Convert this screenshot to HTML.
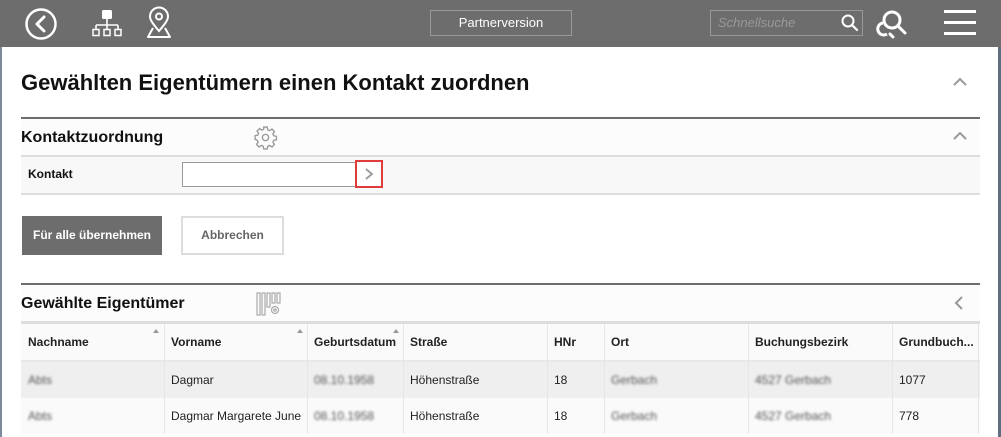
<!DOCTYPE html>
<html><head><meta charset="utf-8"><style>
*{box-sizing:border-box;margin:0;padding:0}
body{width:1001px;height:437px;overflow:hidden;background:#fff;font-family:"Liberation Sans",Arial,sans-serif;position:relative;color:#111}
.abs{position:absolute}
.hdr{left:0;top:0;width:1001px;height:47px;background:#6d6d6d}
.lb{left:0;top:47px;width:2px;height:390px;background:#7d8a99}
.rb{left:998px;top:47px;width:3px;height:390px;background:#5f6f7f}
.line{left:21px;width:959px}
.th{font-size:12px;font-weight:bold;color:#222;top:335px}
.td{font-size:12px;color:#222}
.blur{filter:blur(1.3px);color:#555;font-size:12px!important}
.sep{width:1px;background:#e6e6e6}
</style></head><body>
<div class="abs hdr"></div>
<svg class="abs" style="left:24px;top:7px" width="34" height="34" viewBox="0 0 34 34"><circle cx="17" cy="17" r="14.5" fill="none" stroke="#fff" stroke-width="2.5"/><path d="M20 10 L13 17 L20 24" fill="none" stroke="#fff" stroke-width="3" stroke-linecap="round" stroke-linejoin="round"/></svg>
<svg class="abs" style="left:91px;top:9px" width="32" height="30" viewBox="0 0 32 30"><rect x="11" y="1" width="10" height="9" rx="1.5" fill="#fff"/><path d="M16 10V16M5 16H27M5 16V20M16 16V20M27 16V20" stroke="#fff" stroke-width="1.6" fill="none"/><rect x="2" y="20.5" width="6" height="6" fill="none" stroke="#fff" stroke-width="1.5"/><rect x="13" y="20.5" width="6" height="6" fill="none" stroke="#fff" stroke-width="1.5"/><rect x="24" y="20.5" width="6" height="6" fill="none" stroke="#fff" stroke-width="1.5"/></svg>
<svg class="abs" style="left:142px;top:6px" width="34" height="34" viewBox="0 0 34 34"><path d="M17 25 C11 18 8 14 8 10.5 A9 9 0 0 1 26 10.5 C26 14 23 18 17 25Z" fill="none" stroke="#fff" stroke-width="2"/><circle cx="17" cy="10.5" r="3" fill="none" stroke="#fff" stroke-width="2"/><path d="M11 22 L6 31 H28 L23 22" fill="none" stroke="#fff" stroke-width="2" stroke-linejoin="round"/></svg>
<div class="abs" style="left:430px;top:10px;width:142px;height:26px;border:1px solid #999;color:#fff;font-size:13px;text-align:center;line-height:24px">Partnerversion</div>
<div class="abs" style="left:710px;top:10px;width:153px;height:26px;border:1px solid #999;color:#999;font-size:13px;font-style:italic;line-height:24px;padding-left:7px">Schnellsuche</div>
<svg class="abs" style="left:840px;top:13px" width="20" height="20" viewBox="0 0 20 20"><circle cx="8" cy="8" r="5.5" fill="none" stroke="#fff" stroke-width="2"/><path d="M12 12L17 17" stroke="#fff" stroke-width="2.2" stroke-linecap="round"/></svg>
<svg class="abs" style="left:875px;top:6px" width="38" height="36" viewBox="0 0 38 36"><circle cx="17" cy="14" r="8" fill="none" stroke="#fff" stroke-width="3"/><path d="M23 20L30 27" stroke="#fff" stroke-width="3" stroke-linecap="round"/><path d="M8 17 A6 6 0 1 0 12 28" fill="none" stroke="#fff" stroke-width="3"/><path d="M15 28L18 31" stroke="#fff" stroke-width="3" stroke-linecap="round"/></svg>
<div class="abs" style="left:944px;top:10px;width:32px;height:3px;background:#fff"></div>
<div class="abs" style="left:944px;top:21px;width:32px;height:3px;background:#fff"></div>
<div class="abs" style="left:944px;top:32px;width:32px;height:3px;background:#fff"></div>
<div class="abs lb"></div><div class="abs rb"></div>

<div class="abs" style="left:21px;top:70px;font-size:22px;font-weight:bold;color:#111">Gewählten Eigentümern einen Kontakt zuordnen</div>
<svg class="abs" style="left:952px;top:77px" width="16" height="10"><path d="M2 8L8 2L14 8" fill="none" stroke="#999" stroke-width="2"/></svg>
<div class="abs line" style="top:117px;height:2px;background:#6d6d6d"></div>
<div class="abs line" style="top:119px;height:37px;background:#fcfcfc"></div>
<div class="abs" style="left:21px;top:129px;font-size:16px;font-weight:bold">Kontaktzuordnung</div>
<svg class="abs" style="left:253px;top:125px" width="25" height="25" viewBox="0 0 24 24"><path fill="none" stroke="#999" stroke-width="1.3" d="M10.3 2h3.4l.5 2.6 1.8.8 2.2-1.5 2.4 2.4-1.5 2.2.8 1.8 2.6.5v3.4l-2.6.5-.8 1.8 1.5 2.2-2.4 2.4-2.2-1.5-1.8.8-.5 2.6h-3.4l-.5-2.6-1.8-.8-2.2 1.5-2.4-2.4 1.5-2.2-.8-1.8L2 13.7v-3.4l2.6-.5.8-1.8-1.5-2.2 2.4-2.4 2.2 1.5 1.8-.8z"/><circle cx="12" cy="12" r="3" fill="none" stroke="#999" stroke-width="1.3"/></svg>
<svg class="abs" style="left:952px;top:131px" width="16" height="10"><path d="M2 8L8 2L14 8" fill="none" stroke="#999" stroke-width="2"/></svg>
<div class="abs line" style="top:155px;height:2px;background:#ddd"></div>
<div class="abs line" style="top:157px;height:36px;background:#f8f8f8"></div>
<div class="abs" style="left:28px;top:167px;font-size:12px;font-weight:bold">Kontakt</div>
<div class="abs" style="left:182px;top:162px;width:174px;height:25px;border:1px solid #999;background:#fff"></div>
<div class="abs" style="left:355px;top:160px;width:28px;height:28px;border:2px solid #e03c3c;background:#fff"></div>
<svg class="abs" style="left:363px;top:167px" width="12" height="14"><path d="M3 2L9 7L3 12" fill="none" stroke="#999" stroke-width="1.8"/></svg>
<div class="abs line" style="top:193px;height:2px;background:#ddd"></div>
<div class="abs" style="left:22px;top:216px;width:140px;height:39px;background:#6d6d6d;color:#fff;font-size:12px;font-weight:bold;text-align:center;line-height:39px">Für alle übernehmen</div>
<div class="abs" style="left:181px;top:216px;width:103px;height:39px;border:2px solid #ddd;color:#666;font-size:12px;font-weight:bold;text-align:center;line-height:35px">Abbrechen</div>
<div class="abs line" style="top:283px;height:2px;background:#6d6d6d"></div>
<div class="abs line" style="top:285px;height:36px;background:#fcfcfc"></div>
<div class="abs" style="left:21px;top:295px;font-size:16px;font-weight:bold">Gewählte Eigentümer</div>
<svg class="abs" style="left:256px;top:292px" width="25" height="25" viewBox="0 0 25 25"><g fill="none" stroke="#aaa" stroke-width="1.2"><rect x="1" y="1" width="3" height="22"/><rect x="6" y="1" width="3" height="22"/><rect x="11" y="1" width="3" height="14"/><rect x="16" y="1" width="3" height="10"/><rect x="21" y="1" width="3" height="10"/><circle cx="19" cy="18" r="3.5"/><circle cx="19" cy="18" r="1.2"/></g></svg>
<svg class="abs" style="left:953px;top:295px" width="12" height="16"><path d="M9 2L3 8L9 14" fill="none" stroke="#999" stroke-width="2"/></svg>
<div class="abs line" style="top:321px;height:3px;background:#ddd"></div>
<div class="abs line" style="top:324px;height:36px;background:#fafafa"></div>
<div class="abs line" style="top:360px;height:2px;background:#e8e8e8"></div>
<div class="abs line" style="top:362px;height:36px;background:#efefef"></div>
<div class="abs line" style="top:398px;height:36px;background:#fafafa"></div>
<div class="abs sep" style="left:164px;top:324px;height:110px"></div>
<div class="abs sep" style="left:307px;top:324px;height:110px"></div>
<div class="abs sep" style="left:403px;top:324px;height:110px"></div>
<div class="abs sep" style="left:547px;top:324px;height:110px"></div>
<div class="abs sep" style="left:604px;top:324px;height:110px"></div>
<div class="abs sep" style="left:748px;top:324px;height:110px"></div>
<div class="abs sep" style="left:892px;top:324px;height:110px"></div>
<div class="abs sep" style="left:978px;top:324px;height:110px"></div>
<div class="abs" style="left:153px;top:329px;border:3.5px solid transparent;border-bottom:4px solid #999;border-top:0"></div>
<div class="abs" style="left:297px;top:329px;border:3.5px solid transparent;border-bottom:4px solid #999;border-top:0"></div>
<div class="abs" style="left:393px;top:329px;border:3.5px solid transparent;border-bottom:4px solid #999;border-top:0"></div>
<div class="abs th" style="left:28px">Nachname</div>
<div class="abs th" style="left:171px">Vorname</div>
<div class="abs th" style="left:314px">Geburtsdatum</div>
<div class="abs th" style="left:410px">Straße</div>
<div class="abs th" style="left:554px">HNr</div>
<div class="abs th" style="left:611px">Ort</div>
<div class="abs th" style="left:755px">Buchungsbezirk</div>
<div class="abs th" style="left:899px">Grundbuch...</div>
<div class="abs td blur" style="left:28px;top:373px">Abts</div>
<div class="abs td" style="left:171px;top:373px">Dagmar</div>
<div class="abs td blur" style="left:314px;top:373px">08.10.1958</div>
<div class="abs td" style="left:410px;top:373px">Höhenstraße</div>
<div class="abs td" style="left:554px;top:373px">18</div>
<div class="abs td blur" style="left:611px;top:373px">Gerbach</div>
<div class="abs td blur" style="left:755px;top:373px">4527 Gerbach</div>
<div class="abs td" style="left:899px;top:373px">1077</div>
<div class="abs td blur" style="left:28px;top:409px">Abts</div>
<div class="abs td" style="left:171px;top:409px">Dagmar Margarete June</div>
<div class="abs td blur" style="left:314px;top:409px">08.10.1958</div>
<div class="abs td" style="left:410px;top:409px">Höhenstraße</div>
<div class="abs td" style="left:554px;top:409px">18</div>
<div class="abs td blur" style="left:611px;top:409px">Gerbach</div>
<div class="abs td blur" style="left:755px;top:409px">4527 Gerbach</div>
<div class="abs td" style="left:899px;top:409px">778</div>
</body></html>
